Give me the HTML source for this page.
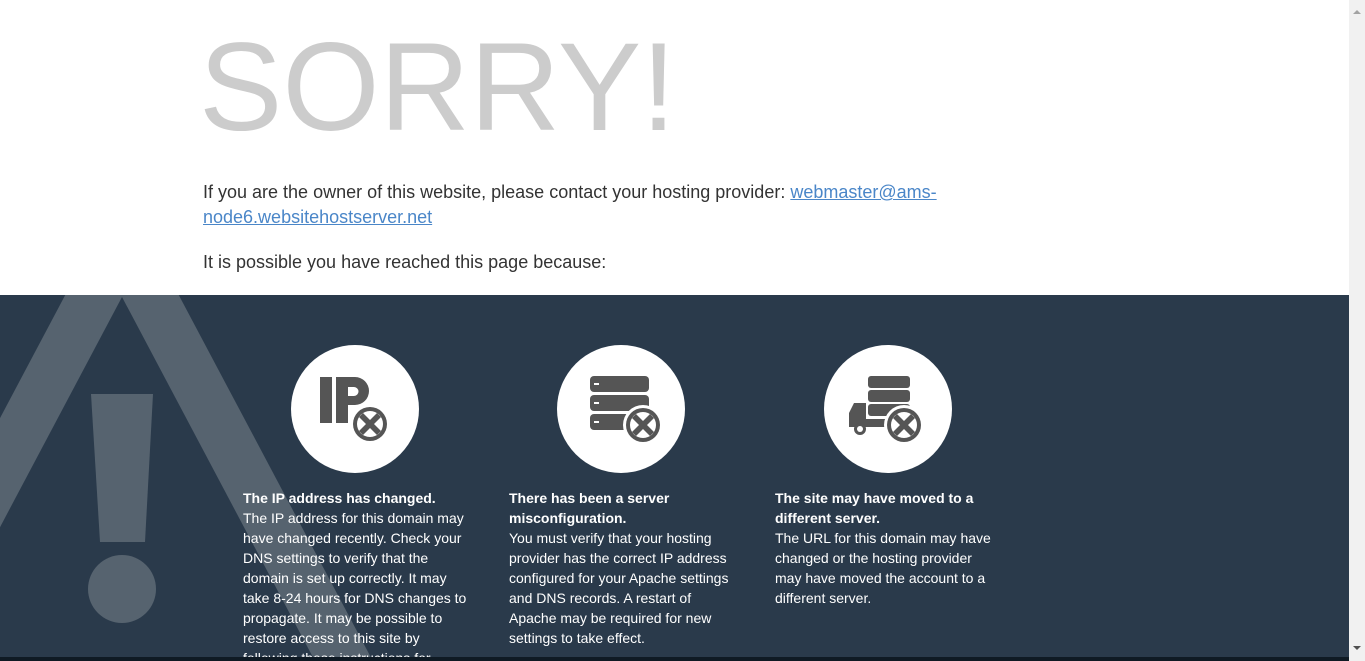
<!DOCTYPE html>
<html><head><meta charset="utf-8"><style>
html,body{margin:0;padding:0;}
body{width:1365px;height:661px;overflow:hidden;position:relative;font-family:"Liberation Sans",Arial,sans-serif;background:#fff;}
.sorry{position:absolute;left:199px;top:13px;font-size:125px;color:#ccc;line-height:150px;margin:0;}
.p{position:absolute;left:203px;font-size:18px;color:#333;line-height:25px;margin:0;}
.p a{color:#4a86c8;text-decoration:underline;}
.dark{position:absolute;left:0;top:295px;width:1349px;height:366px;background:#2a3a4b;overflow:hidden;}
.circ{position:absolute;top:50px;width:128px;height:128px;border-radius:50%;background:#fff;}
.col{position:absolute;top:193px;width:230px;font-size:14px;line-height:20px;color:#fff;}
.col b{font-weight:bold;}
.sb{position:absolute;right:0;top:0;width:16px;height:661px;background:#f1f1f1;}
.bar{position:absolute;left:0;top:657px;width:1349px;height:4px;background:#0f1a24;}
</style></head><body>
<div class="sorry">SORRY!</div>
<p class="p" style="top:180px">If you are the owner of this website, please contact your hosting provider: <a>webmaster@ams-</a><br><a>node6.websitehostserver.net</a></p>
<p class="p" style="top:250px">It is possible you have reached this page because:</p>
<div class="dark">
<svg width="1349" height="366" style="position:absolute;left:0;top:0">
<polygon points="122,-107 -307,702 551,702" fill="#56636f"/>
<polygon points="122,2 -249,702 493,702" fill="#2a3a4b"/>
<polygon points="91,99 153,99 145,247 100,247" fill="#56636f"/>
<circle cx="122" cy="294" r="34" fill="#56636f"/>
</svg>
<div class="circ" style="left:291px">
<svg width="128" height="128"><g fill="#555">
<rect x="29" y="32" width="12" height="46"/>
<path d="M45 32h19a14 14 0 0 1 0 28h-7v18h-12z M57 42v9h6a4.5 4.5 0 0 0 0-9z" fill-rule="evenodd"/>
<circle cx="79" cy="79" r="20" fill="#fff"/>
<circle cx="79" cy="79" r="17"/><circle cx="79" cy="79" r="13" fill="#fff"/>
<path d="M72 68l7 7 7-7 4 4-7 7 7 7-4 4-7-7-7 7-4-4 7-7-7-7z"/>
</g></svg></div>
<div class="circ" style="left:557px">
<svg width="128" height="128"><g fill="#555">
<rect x="33" y="31" width="59" height="16" rx="4"/>
<rect x="33" y="50" width="59" height="16" rx="4"/>
<rect x="33" y="69" width="59" height="16" rx="4"/>
<g fill="#fff"><rect x="37" y="38" width="5" height="2"/><rect x="37" y="57" width="5" height="2"/><rect x="37" y="76" width="5" height="2"/></g>
<circle cx="86" cy="80" r="20" fill="#fff"/>
<circle cx="86" cy="80" r="17"/><circle cx="86" cy="80" r="13" fill="#fff"/>
<path d="M79 69l7 7 7-7 4 4-7 7 7 7-4 4-7-7-7 7-4-4 7-7-7-7z"/>
</g></svg></div>
<div class="circ" style="left:824px">
<svg width="128" height="128"><g fill="#555">
<rect x="44" y="31" width="42" height="12" rx="3"/>
<rect x="44" y="45" width="42" height="12" rx="3"/>
<rect x="44" y="59" width="42" height="12" rx="3"/>
<path d="M30 58h12v24h-17v-14z"/>
<rect x="25" y="74" width="36" height="8"/>
<circle cx="36" cy="84" r="6"/><circle cx="36" cy="84" r="3" fill="#fff"/>
<circle cx="80" cy="80" r="20" fill="#fff"/>
<circle cx="80" cy="80" r="17"/><circle cx="80" cy="80" r="13" fill="#fff"/>
<path d="M73 69l7 7 7-7 4 4-7 7 7 7-4 4-7-7-7 7-4-4 7-7-7-7z"/>
</g></svg></div>
<div class="col" style="left:243px"><b>The IP address has changed.</b><br>The IP address for this domain may<br>have changed recently. Check your<br>DNS settings to verify that the<br>domain is set up correctly. It may<br>take 8-24 hours for DNS changes to<br>propagate. It may be possible to<br>restore access to this site by<br>following these instructions for</div>
<div class="col" style="left:509px"><b>There has been a server<br>misconfiguration.</b><br>You must verify that your hosting<br>provider has the correct IP address<br>configured for your Apache settings<br>and DNS records. A restart of<br>Apache may be required for new<br>settings to take effect.</div>
<div class="col" style="left:775px"><b>The site may have moved to a<br>different server.</b><br>The URL for this domain may have<br>changed or the hosting provider<br>may have moved the account to a<br>different server.</div>
</div>
<div class="bar"></div>
<div class="sb"><div style="position:absolute;left:4px;top:646px;width:0;height:0;border-left:4px solid transparent;border-right:4px solid transparent;border-top:4px solid #505050"></div><div style="position:absolute;left:4px;top:10px;width:0;height:0;border-left:4px solid transparent;border-right:4px solid transparent;border-bottom:4px solid #a3a3a3"></div></div>
</body></html>
